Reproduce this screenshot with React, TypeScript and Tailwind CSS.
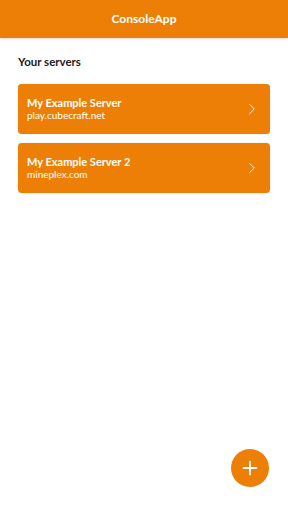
import { ChevronRight, Plus } from 'lucide-react';

const servers = [
    { name: 'My Example Server', host: 'play.cubecraft.net' },
    { name: 'My Example Server 2', host: 'mineplex.com' },
];

export default function App() {
    return (
        <div className="relative flex h-[512px] w-[288px] flex-col bg-white" style={{ fontFamily: 'Lato, "Noto Sans", sans-serif' }}>
            {/* header */}
            <div className="flex h-[38px] items-center justify-center bg-[#ed7f06] shadow-[0_1px_2px_rgba(0,0,0,0.15)]">
                <span className="text-[12px] font-bold text-white">ConsoleApp</span>
            </div>

            <div className="flex flex-col px-[18px] pt-[15px]">
                <h2 className="text-[11.5px] font-bold text-[#222]">Your servers</h2>
                <div className="mt-[14px] flex flex-col gap-[9px]">
                    {servers.map((s) => (
                        <div key={s.name} className="flex h-[50px] items-center justify-between rounded-[4px] bg-[#ed7f06] pl-[9px] pr-[9px] shadow-[0_0_1px_rgba(0,0,0,0.3)]">
                            <div className="flex flex-col leading-[12px] text-white">
                                <span className="text-[11px] font-bold">{s.name}</span>
                                <span className="text-[10px]">{s.host}</span>
                            </div>
                            <ChevronRight className="h-[18px] w-[18px] text-white" strokeWidth={1.3} />
                        </div>
                    ))}
                </div>
            </div>

            {/* floating add button */}
            <button className="absolute bottom-[25px] right-[19px] flex h-[38px] w-[38px] items-center justify-center rounded-full bg-[#ed7f06]">
                <Plus className="h-[22px] w-[22px] text-white" strokeWidth={2} />
            </button>
        </div>
    );
}
